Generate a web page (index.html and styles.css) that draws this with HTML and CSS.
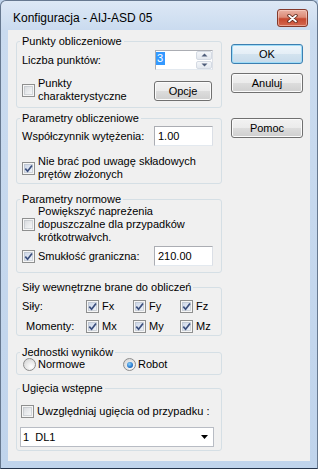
FILE: index.html
```html
<!DOCTYPE html>
<html lang="pl">
<head>
<meta charset="utf-8">
<title>Konfiguracja</title>
<link rel="stylesheet" href="styles.css">
</head>
<body>
<div class="window">
  <div class="titlebar">
    <span class="title">Konfiguracja - AIJ-ASD 05</span>
    <div class="close">
      <svg width="11" height="9" viewBox="0 0 11 9"><path d="M2 1.5 L9 7.5 M9 1.5 L2 7.5" stroke="#5a2418" stroke-width="3.4" stroke-linecap="round" fill="none"/><path d="M2 1.5 L9 7.5 M9 1.5 L2 7.5" stroke="#ffffff" stroke-width="1.7" stroke-linecap="round" fill="none"/></svg>
    </div>
  </div>
  <div class="client">
    <div class="groups">
      <div class="group g1">
        <div class="group-title">Punkty obliczeniowe</div>
        <div class="row r-field">
          <span>Liczba punktów:</span>
          <div class="spin">
            <div class="spin-field"><span class="sel">3</span></div>
            <div class="spin-btns">
              <span class="spin-btn"><svg width="7" height="4" viewBox="0 0 7 4"><path d="M0.5 3.5 L3.5 0.5 L6.5 3.5 Z" fill="#4e5d7a"/></svg></span>
              <span class="spin-btn"><svg width="7" height="4" viewBox="0 0 7 4"><path d="M0.5 0.5 L3.5 3.5 L6.5 0.5 Z" fill="#4e5d7a"/></svg></span>
            </div>
          </div>
        </div>
        <div class="row r-char">
          <label class="check">
            <span class="box"></span>
            <span class="text">Punkty<br>charakterystyczne</span>
          </label>
          <button class="btn btn-opcje">Opcje</button>
        </div>
      </div>

      <div class="group g2">
        <div class="group-title">Parametry obliczeniowe</div>
        <div class="row r-input">
          <span>Współczynnik wytężenia:</span>
          <div class="textbox">1.00</div>
        </div>
        <label class="check r-skl">
          <span class="box checked"><svg width="11" height="11" viewBox="0 0 11 11"><path d="M2.3 5.6 L4.6 8.2 L9 2.4" stroke="#3b4f7d" stroke-width="1.7" fill="none"/></svg></span>
          <span class="text">Nie brać pod uwagę składowych<br>prętów złożonych</span>
        </label>
      </div>

      <div class="group g3">
        <div class="group-title">Parametry normowe</div>
        <label class="check r-pow">
          <span class="box"></span>
          <span class="text">Powiększyć napreżenia<br>dopuszczalne dla przypadków<br>krótkotrwałvch.</span>
        </label>
        <div class="row r-smuk">
          <label class="check">
            <span class="box checked"><svg width="11" height="11" viewBox="0 0 11 11"><path d="M2.3 5.6 L4.6 8.2 L9 2.4" stroke="#3b4f7d" stroke-width="1.7" fill="none"/></svg></span>
            <span class="text">Smukłość graniczna:</span>
          </label>
          <div class="textbox">210.00</div>
        </div>
      </div>

      <div class="group g4">
        <div class="group-title">Siły wewnętrzne brane do obliczeń</div>
        <div class="forces">
          <span class="f-label">Siły:</span>
          <label class="check"><span class="box checked"><svg width="11" height="11" viewBox="0 0 11 11"><path d="M2.3 5.6 L4.6 8.2 L9 2.4" stroke="#3b4f7d" stroke-width="1.7" fill="none"/></svg></span><span class="text">Fx</span></label>
          <label class="check"><span class="box checked"><svg width="11" height="11" viewBox="0 0 11 11"><path d="M2.3 5.6 L4.6 8.2 L9 2.4" stroke="#3b4f7d" stroke-width="1.7" fill="none"/></svg></span><span class="text">Fy</span></label>
          <label class="check"><span class="box checked"><svg width="11" height="11" viewBox="0 0 11 11"><path d="M2.3 5.6 L4.6 8.2 L9 2.4" stroke="#3b4f7d" stroke-width="1.7" fill="none"/></svg></span><span class="text">Fz</span></label>
          <span class="f-label f-mom">Momenty:</span>
          <label class="check"><span class="box checked"><svg width="11" height="11" viewBox="0 0 11 11"><path d="M2.3 5.6 L4.6 8.2 L9 2.4" stroke="#3b4f7d" stroke-width="1.7" fill="none"/></svg></span><span class="text">Mx</span></label>
          <label class="check"><span class="box checked"><svg width="11" height="11" viewBox="0 0 11 11"><path d="M2.3 5.6 L4.6 8.2 L9 2.4" stroke="#3b4f7d" stroke-width="1.7" fill="none"/></svg></span><span class="text">My</span></label>
          <label class="check"><span class="box checked"><svg width="11" height="11" viewBox="0 0 11 11"><path d="M2.3 5.6 L4.6 8.2 L9 2.4" stroke="#3b4f7d" stroke-width="1.7" fill="none"/></svg></span><span class="text">Mz</span></label>
        </div>
      </div>

      <div class="group g5">
        <div class="group-title">Jednostki wyników</div>
        <div class="radios">
          <label class="radio-item"><span class="radio"></span><span class="text">Normowe</span></label>
          <label class="radio-item"><span class="radio on"><span class="dot"></span></span><span class="text">Robot</span></label>
        </div>
      </div>

      <div class="group g6">
        <div class="group-title">Ugięcia wstępne</div>
        <label class="check r-ug">
          <span class="box"></span>
          <span class="text">Uwzględniaj ugięcia od przypadku :</span>
        </label>
        <div class="combo">
          <span class="combo-text">1  DL1</span>
          <svg width="7" height="4" viewBox="0 0 7 4"><path d="M0 0 L7 0 L3.5 4 Z" fill="#000"/></svg>
        </div>
      </div>
    </div>

    <div class="buttons">
      <button class="btn btn-default">OK</button>
      <button class="btn btn-cancel">Anuluj</button>
      <button class="btn btn-help">Pomoc</button>
    </div>
  </div>
</div>
</body>
</html>
```

FILE: styles.css
```css
* { box-sizing: border-box; }
html, body { margin: 0; padding: 0; }
body {
  width: 318px;
  height: 469px;
  overflow: hidden;
  font-family: "Liberation Sans", Arial, sans-serif;
  font-size: 11px;
  color: #000;
  background: #bfd3eb;
}
.window {
  width: 318px;
  height: 469px;
  border: 1px solid #66788f;
  border-bottom-color: #24334a;
  border-radius: 6px 6px 0 0;
  background: linear-gradient(#dde8f5 0px, #cadbef 29px, #c0d4ec 100%);
  display: flex;
  flex-direction: column;
}
.titlebar {
  height: 29px;
  display: flex;
  align-items: flex-start;
  padding-left: 12px;
}
.title {
  margin-top: 10px;
  line-height: 14px;
  font-size: 12px;
}
.close {
  margin-left: auto;
  margin-top: 8px;
  margin-right: 9px;
  width: 31px;
  height: 18px;
  border: 1px solid #83392b;
  border-radius: 3px;
  background: linear-gradient(#eab2a4 0%, #dc8b77 45%, #c6482f 55%, #d4684f 100%);
  box-shadow: inset 0 0 0 1px rgba(255, 220, 210, 0.5);
  display: flex;
  align-items: center;
  justify-content: center;
}
.client {
  height: 431px;
  margin: 0 7px;
  background: #f0f0f0;
  display: flex;
  padding: 11px 0 0 8px;
}
.groups {
  width: 206px;
  display: flex;
  flex-direction: column;
}
.group {
  border: 1px solid #d5dfe5;
  border-radius: 3px;
  padding: 0 8px 0 5px;
}
.group-title {
  display: table;
  margin: -7px 0 0 -2px;
  padding: 0 2px;
  background: #f0f0f0;
  line-height: 13px;
}
.g1 { height: 67px; }
.g2 { margin-top: 10px; height: 66px; }
.g3 { margin-top: 15px; height: 74px; }
.g4 { margin-top: 14px; height: 49px; }
.g5 { margin-top: 16px; height: 23px; }
.g6 { margin-top: 13px; height: 63px; }

.row {
  display: flex;
  align-items: center;
  justify-content: space-between;
}
.r-field { margin-top: 2px; height: 20px; }
.r-char { margin-top: 7px; height: 26px; }
.r-input { margin-top: 1px; height: 20px; }
.r-skl { margin-top: 9px; }
.r-pow { margin-top: -1px; }
.r-smuk { margin-top: 2px; height: 20px; }
.r-ug { margin-top: 10px; margin-left: -1px; }

.text { line-height: 13px; }
.check {
  display: flex;
  align-items: center;
  gap: 3px;
}
.box {
  flex: none;
  width: 13px;
  height: 13px;
  border: 1px solid #8e8f8f;
  background: linear-gradient(135deg, #d2d4d8 0%, #eceef0 60%, #fbfbfb 100%);
  box-shadow: inset 0 0 0 1px #f6f6f6, inset 0 0 0 2px rgba(180, 185, 192, 0.5);
  display: flex;
  align-items: center;
  justify-content: center;
}
.box.checked {
  background: linear-gradient(135deg, #c3cfe3 0%, #e3e9f4 60%, #f7f9fc 100%);
}
.box svg { display: block; }

.spin {
  width: 58px;
  height: 20px;
  border: 1px solid #abadb3;
  border-right-color: #dbdfe6;
  border-bottom-color: #e3e9ef;
  background: #fff;
  display: flex;
}
.spin-field {
  flex: 1;
  display: flex;
  align-items: center;
}
.sel {
  background: #3399ff;
  color: #fff;
  line-height: 13px;
  padding: 0 2px 0 1px;
  margin-top: -3px;
}
.spin-btns {
  width: 16px;
  display: flex;
  flex-direction: column;
  gap: 1px;
}
.spin-btn {
  flex: 1;
  border: 1px solid #d4dae3;
  border-radius: 2px;
  background: linear-gradient(#f4f6f9, #e3e8ef);
  display: flex;
  align-items: center;
  justify-content: center;
}
.spin-btn svg { display: block; }

.textbox {
  width: 59px;
  height: 20px;
  border: 1px solid #abadb3;
  border-right-color: #dbdfe6;
  border-bottom-color: #e3e9ef;
  background: #fff;
  padding-left: 3px;
  line-height: 18px;
}

.btn {
  width: 72px;
  height: 20px;
  padding: 0;
  border: 1px solid #707070;
  border-radius: 3px;
  background: linear-gradient(#f2f2f2 0%, #ebebeb 50%, #dddddd 50%, #cfcfcf 100%);
  box-shadow: inset 0 0 0 1px #fbfbfb;
  font-family: "Liberation Sans", Arial, sans-serif;
  font-size: 11px;
  font-weight: 400;
  color: #000;
  line-height: 18px;
}
.btn-opcje { width: 58px; margin-right: 1px; margin-top: 2px; }
.buttons {
  margin-left: 9px;
  padding-top: 3px;
  display: flex;
  flex-direction: column;
}
.btn-default {
  border-color: #3c7fb1;
  box-shadow: inset 0 0 0 1px #9fdcf7;
  background: linear-gradient(#eef6fb 0%, #e4eef6 50%, #d3e3ef 50%, #c7dbeb 100%);
}
.btn-cancel { margin-top: 9px; }
.btn-help { margin-top: 25px; }

.forces {
  margin-top: 6px;
  display: grid;
  grid-template-columns: 64px 47px 47px 1fr;
  row-gap: 7px;
  line-height: 13px;
}
.f-mom { padding-left: 4px; }

.radios {
  margin-top: -1px;
  display: grid;
  grid-template-columns: 100px 1fr;
}
.radio-item {
  display: flex;
  align-items: center;
  gap: 2px;
  margin-left: 1px;
}
.radio {
  flex: none;
  width: 13px;
  height: 13px;
  border-radius: 50%;
  border: 1px solid #8d8d8d;
  background: radial-gradient(circle at 65% 70%, #ffffff 0%, #e4e4e4 55%, #cfcfcf 100%);
  display: flex;
  align-items: center;
  justify-content: center;
}
.dot {
  width: 6px;
  height: 6px;
  border-radius: 50%;
  background: radial-gradient(circle at 40% 35%, #8fd3fb 0%, #2c7fd2 55%, #14489a 100%);
}

.combo {
  margin-top: 9px;
  margin-left: -2px;
  width: 194px;
  height: 20px;
  border: 1px solid #b8bcc4;
  background: #fff;
  display: flex;
  align-items: center;
  justify-content: space-between;
  padding: 0 5px 0 2px;
}
.combo-text { white-space: pre; }
.combo svg { display: block; }
```
